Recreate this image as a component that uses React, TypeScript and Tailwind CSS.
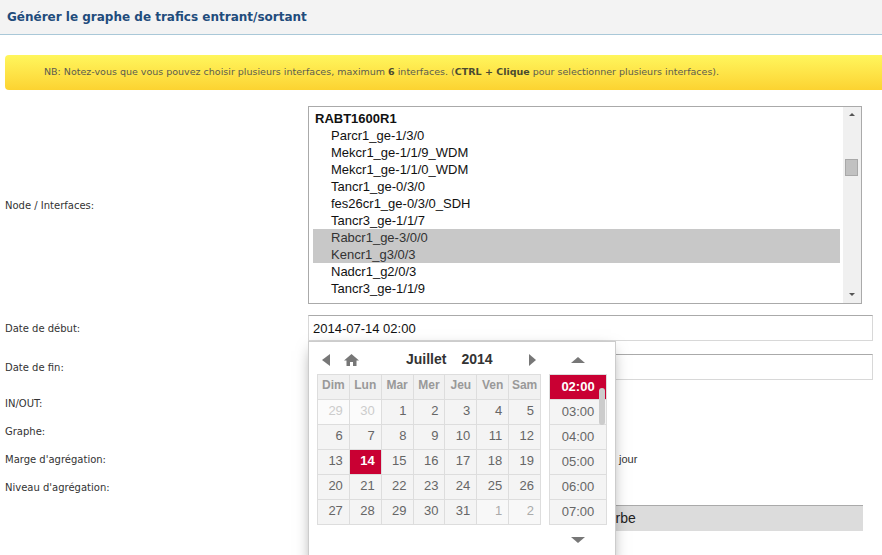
import React from "react"

const interfaces = [
  "Parcr1_ge-1/3/0",
  "Mekcr1_ge-1/1/9_WDM",
  "Mekcr1_ge-1/1/0_WDM",
  "Tancr1_ge-0/3/0",
  "fes26cr1_ge-0/3/0_SDH",
  "Tancr3_ge-1/1/7",
  "Rabcr1_ge-3/0/0",
  "Kencr1_g3/0/3",
  "Nadcr1_g2/0/3",
  "Tancr3_ge-1/1/9",
]
const selectionnes = ["Rabcr1_ge-3/0/0", "Kencr1_g3/0/3"]

const jours = ["Dim", "Lun", "Mar", "Mer", "Jeu", "Ven", "Sam"]
const semaines = [
  [29, 30, 1, 2, 3, 4, 5],
  [6, 7, 8, 9, 10, 11, 12],
  [13, 14, 15, 16, 17, 18, 19],
  [20, 21, 22, 23, 24, 25, 26],
  [27, 28, 29, 30, 31, 1, 2],
]
const heures = ["02:00", "03:00", "04:00", "05:00", "06:00", "07:00"]

function Label({ children }: { children: React.ReactNode }) {
  return <div className="w-[303px] shrink-0 flex items-center text-[10px] text-[#333]">{children}</div>
}

function Calendrier() {
  return (
    <div className="absolute left-[308px] top-[341px] w-[308px] h-[225px] bg-white border border-[#ccc] shadow-[0_5px_15px_-5px_rgba(0,0,0,0.5)] pl-[8px] flex gap-[8px] font-['Liberation_Sans',Arial,sans-serif]">
      <div className="w-[224px]">
        <div className="h-[32px] pt-[3px] flex items-center">
          <div className="ml-[5px] w-0 h-0 border-y-[6px] border-y-transparent border-r-[8px] border-r-[#777]" />
          <svg className="ml-[14px]" width="15" height="12" viewBox="0 0 15 12">
            <path d="M7.5 0 L15 6.5 L12.5 6.5 L12.5 12 L9 12 L9 8 L6 8 L6 12 L2.5 12 L2.5 6.5 L0 6.5 Z" fill="#777" />
          </svg>
          <span className="ml-[47px] text-[14px] font-bold text-[#333]">Juillet</span>
          <span className="ml-[15px] text-[14px] font-bold text-[#333]">2014</span>
          <div className="ml-auto mr-[5px] w-0 h-0 border-y-[6px] border-y-transparent border-l-[7px] border-l-[#777]" />
        </div>
        <div className="grid grid-cols-7 border-l border-t border-[#ddd]">
          {jours.map(j => (
            <div key={j} className="h-[25px] border-r border-b border-[#ddd] bg-[#f1f1f1] text-center text-[12px] font-bold text-[#999] leading-[21px]">
              {j}
            </div>
          ))}
          {semaines.map((sem, s) =>
            sem.map((d, i) => {
              const avant = s === 0 && d > 20
              const apres = s === 4 && d < 10
              const actuel = s === 2 && d === 14
              return (
                <div
                  key={`${s}-${i}`}
                  className={
                    "h-[25px] border-r border-b border-[#ddd] text-right pr-[6px] text-[13px] leading-[21px] " +
                    (actuel
                      ? "bg-[#c90033] text-white font-bold"
                      : avant
                        ? "bg-[#fbfbfb] text-[#ccc]"
                        : apres
                          ? "bg-[#f8f8f8] text-[#aaa]"
                          : "bg-[#f4f4f4] text-[#666]")
                  }
                >
                  {d}
                </div>
              )
            })
          )}
        </div>
      </div>
      <div className="w-[58px]">
        <div className="h-[32px] pt-[3px] flex items-center justify-center">
          <div className="w-0 h-0 border-x-[7px] border-x-transparent border-b-[6px] border-b-[#777]" />
        </div>
        <div className="relative h-[151px] border border-[#ddd] overflow-hidden">
          {heures.map((h, i) => (
            <div
              key={h}
              className={
                "h-[25px] flex items-center justify-center text-[13px] border-b border-[#ddd] " +
                (i === 0 ? "bg-[#c90033] text-white font-bold" : "bg-[#f4f4f4] text-[#666]")
              }
            >
              {h}
            </div>
          ))}
          <div className="absolute right-[1px] top-[13px] w-[6px] h-[37px] rounded-[3px] bg-[#ccc]" />
        </div>
        <div className="h-[30px] flex items-center justify-center">
          <div className="w-0 h-0 border-x-[7px] border-x-transparent border-t-[6px] border-t-[#777]" />
        </div>
      </div>
    </div>
  )
}

export default function App() {
  return (
    <div className="relative w-[882px] h-[555px] overflow-hidden bg-white font-['DejaVu_Sans',Verdana,sans-serif]">
      <div className="h-[35px] bg-[#f3f3f3] border-b border-[#a9c8d8] px-[7px] flex items-center">
        <h1 className="text-[12px] font-bold text-[#1f4c7c]">Générer le graphe de trafics entrant/sortant</h1>
      </div>

      <div className="mt-[20px] ml-[5px] -mr-[6px] h-[35px] rounded-[4px] bg-gradient-to-b from-[#fff65c] to-[#fcd330] flex items-center pl-[39px] text-[9.5px] text-[#5c5c50]">
        <span>
          NB: Notez-vous que vous pouvez choisir plusieurs interfaces, maximum <b className="text-[#4a4a30]">6</b> interfaces. (
          <b className="text-[#4a4a30]">CTRL + Clique</b> pour selectionner plusieurs interfaces).
        </span>
      </div>

      <div className="pl-[5px] mt-[16px]">
        <div className="flex h-[198px]">
          <Label>Node / Interfaces:</Label>
          <div className="w-[554px] h-[198px] border border-[#aaa] flex font-['Liberation_Sans',Arial,sans-serif] text-[13px] text-[#111]">
            <div className="flex-1 pl-[4px] pt-[3px] overflow-hidden">
              <div className="h-[17px] leading-[17px] pl-[2px] font-bold">RABT1600R1</div>
              {interfaces.map(nom => (
                <div
                  key={nom}
                  className={"h-[17px] leading-[17px] pl-[18px] " + (selectionnes.includes(nom) ? "bg-[#c8c8c8] text-[#333]" : "")}
                >
                  {nom}
                </div>
              ))}
            </div>
            <div className="ml-[3px] w-[18px] bg-[#f0f0f0] relative">
              <div className="absolute left-[6px] top-[6px] w-0 h-0 border-x-[3px] border-x-transparent border-b-[3px] border-b-[#555]" />
              <div className="absolute left-[2px] top-[52px] w-[13px] h-[17px] bg-[#c1c1c1] border border-[#a8a8a8]" />
              <div className="absolute left-[6px] bottom-[7px] w-0 h-0 border-x-[3px] border-x-transparent border-t-[3px] border-t-[#555]" />
            </div>
          </div>
        </div>

        <div className="flex h-[26px] mt-[11px]">
          <Label>Date de début:</Label>
          <div className="w-[565px] h-[26px] border border-[#d8d8d8] border-t-[#aaa] pl-[4px] pt-[1px] flex items-center font-['Liberation_Sans',Arial,sans-serif] text-[13px] text-[#111]">
            2014-07-14 02:00
          </div>
        </div>

        <div className="flex h-[26px] mt-[13px]">
          <Label>Date de fin:</Label>
          <div className="w-[565px] h-[26px] border border-[#d8d8d8] border-t-[#aaa]" />
        </div>

        <div className="mt-[9px]">
          <div className="flex h-[28px]">
            <Label>IN/OUT:</Label>
          </div>
          <div className="flex h-[28px]">
            <Label>Graphe:</Label>
          </div>
          <div className="flex h-[28px]">
            <Label>Marge d'agrégation:</Label>
            <div className="flex items-center font-['Liberation_Sans',Arial,sans-serif] text-[11px] text-[#333] pl-[311px]">jour</div>
          </div>
          <div className="flex h-[28px]">
            <Label>Niveau d'agrégation:</Label>
          </div>
        </div>

        <div className="flex mt-[4px]">
          <div className="w-[303px] shrink-0" />
          <div className="w-[555px] h-[26px] bg-[#dcdcdc] border-t border-[#aaa] flex items-center justify-center pl-[15px] font-['Liberation_Sans',Arial,sans-serif] text-[14px] text-[#222]">
            Voir la courbe
          </div>
        </div>
      </div>

      <Calendrier />
    </div>
  )
}
